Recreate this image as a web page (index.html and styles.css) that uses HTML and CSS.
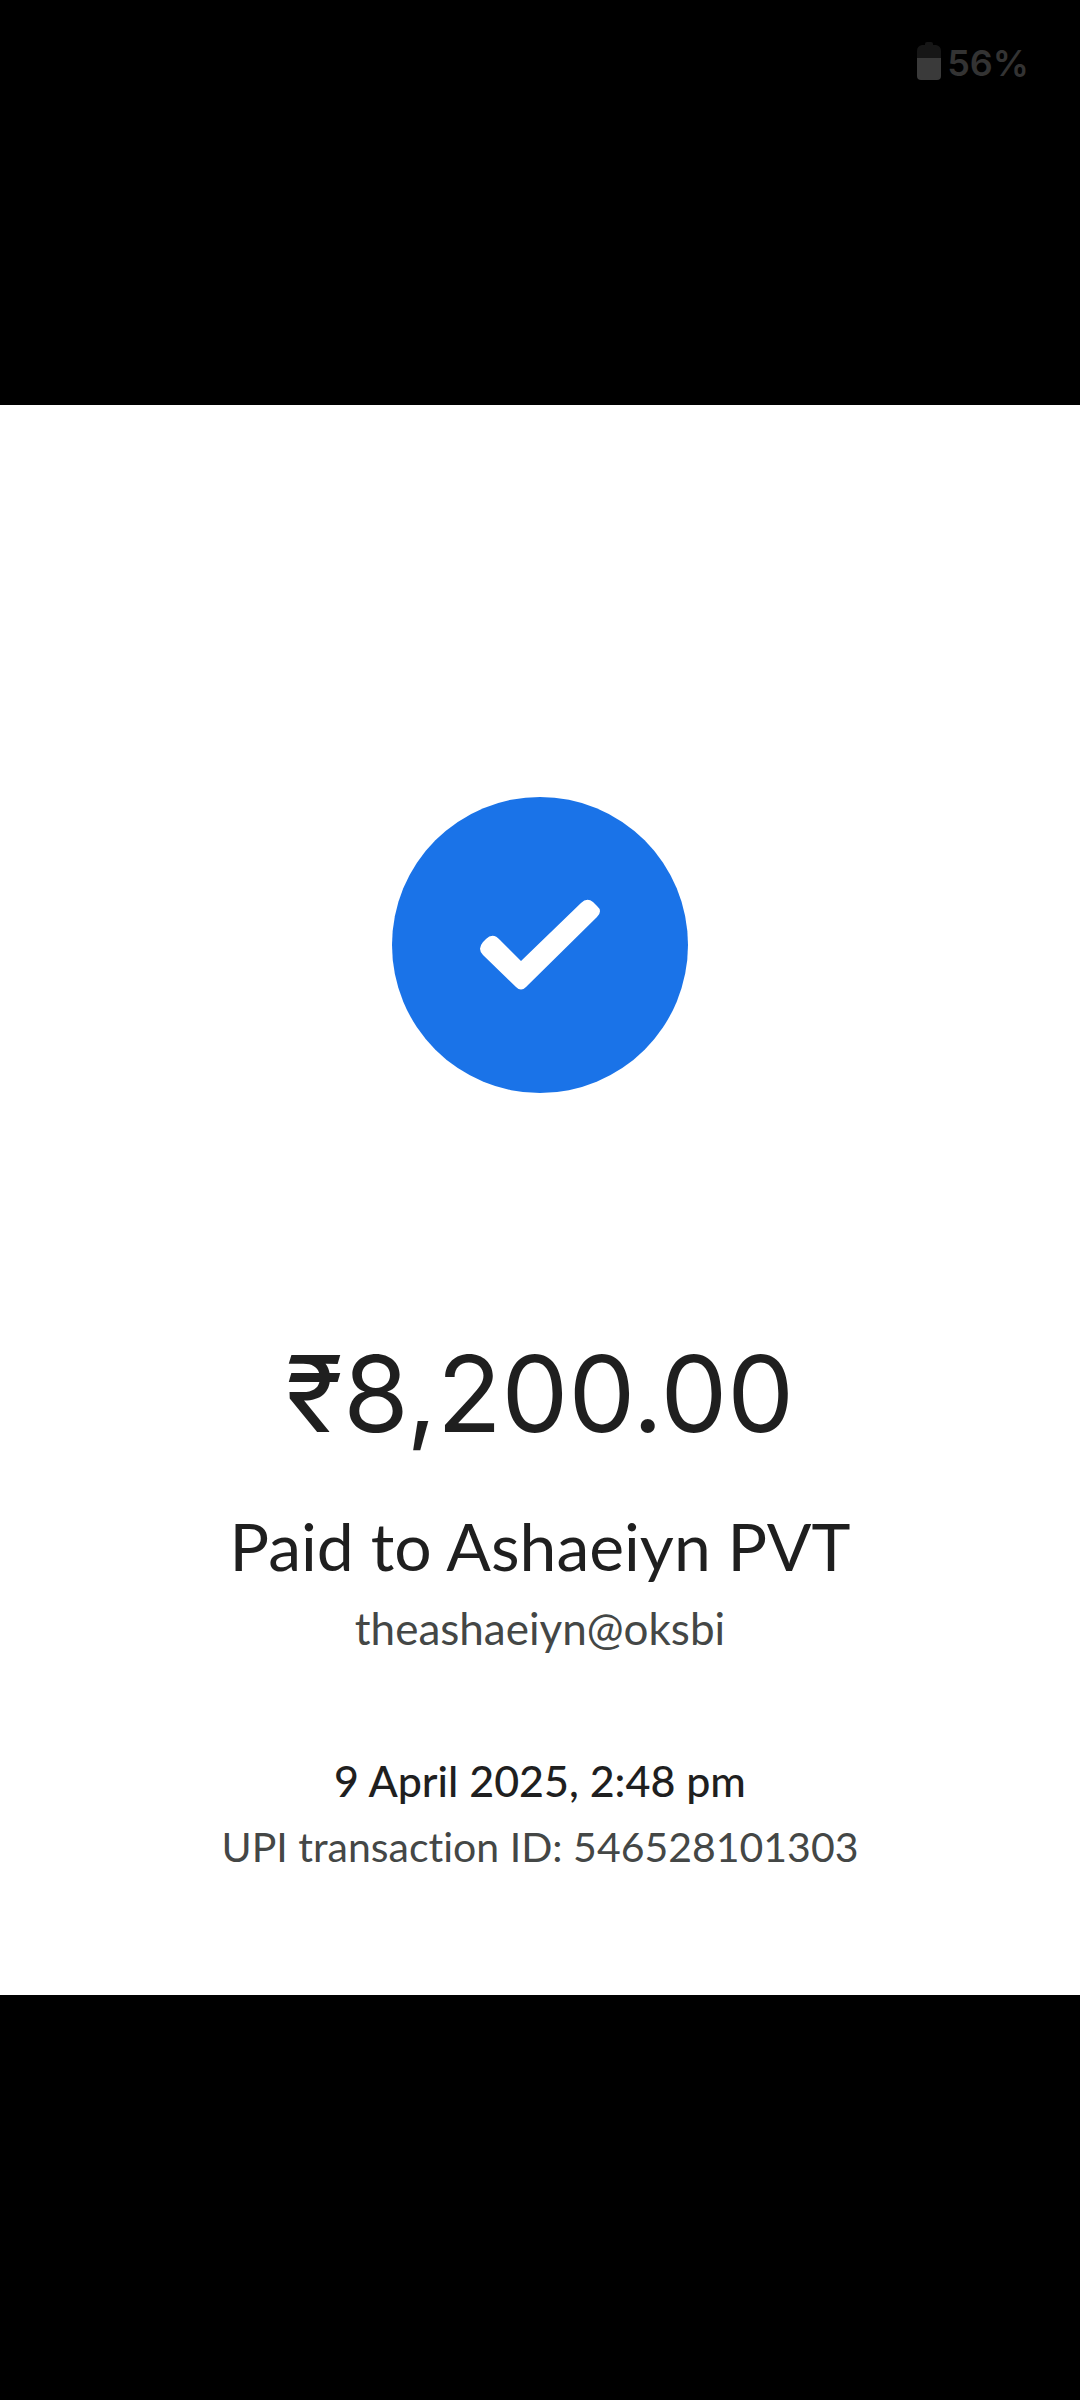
FILE: index.html
```
<!DOCTYPE html>
<html lang="en">
<head>
<meta charset="utf-8">
<meta name="viewport" content="width=device-width, initial-scale=1">
<title>Payment receipt</title>
<link rel="stylesheet" href="styles.css">
</head>
<body>
<header class="status-bar">
  <svg class="battery" viewBox="0 0 24 38" aria-hidden="true">
    <path fill="#161616" d="M8 2Q8 0 10 0H14Q16 0 16 2V3H19Q24 4 24 9V16H0V9Q0 4 5 3H8Z"/>
    <path fill="#3a3a3a" d="M0 16H24V34Q24 38 20 38H4Q0 38 0 34Z"/>
  </svg>
  <span class="battery-level">56%</span>
</header>
<main class="receipt">
  <svg class="success" viewBox="0 0 296 296" role="img" aria-label="Payment successful">
    <circle cx="148" cy="148" r="148" fill="#1a73e8"/>
    <path fill="#fff" d="M129 164L108 143Q101 135 94 142L91 145Q85 152 91 158L124 190Q129 195 134 190L205 120Q211 114 205 109L201 105Q195 100 189 106Z"/>
  </svg>
  <p class="amount">₹8,200.00</p>
  <h1 class="payee">Paid to Ashaeiyn PVT</h1>
  <p class="handle">theashaeiyn@oksbi</p>
  <p class="date">9 April 2025, 2:48 pm</p>
  <p class="transaction">UPI transaction ID: 546528101303</p>
</main>
</body>
</html>
```
FILE: styles.css
```
* {
  box-sizing: border-box;
}

body {
  margin: 0;
  min-height: 100vh;
  background: #000;
  color: #1f1f1f;
  font-family: Lato, sans-serif;
  font-variant-ligatures: none;
}

h1,
p {
  margin: 0;
}

.status-bar {
  display: flex;
  align-items: flex-start;
  justify-content: flex-end;
  gap: 6px;
  height: 405px;
  padding: 42px 51px 0 0;
}

.battery {
  width: 24px;
  height: 38px;
}

.battery-level {
  color: #333;
  font: 600 36px/42px Inter, sans-serif;
}

.receipt {
  display: flex;
  flex-direction: column;
  align-items: center;
  padding: 392px 24px 120px;
  background: #fff;
  text-align: center;
}

.success {
  width: 296px;
  height: 296px;
}

.amount {
  margin-top: 237px;
  font: 400 106px/128px Inter, sans-serif;
}

.payee {
  margin-top: 48px;
  font-size: 66px;
  font-weight: 400;
  line-height: 80px;
}

.handle {
  margin-top: 14px;
  color: #444746;
  font-size: 44px;
  line-height: 56px;
}

.date {
  margin-top: 97px;
  font-size: 43px;
  font-weight: 500;
  line-height: 56px;
}

.transaction {
  margin-top: 10px;
  color: #444746;
  font-size: 41px;
  line-height: 56px;
}
```
